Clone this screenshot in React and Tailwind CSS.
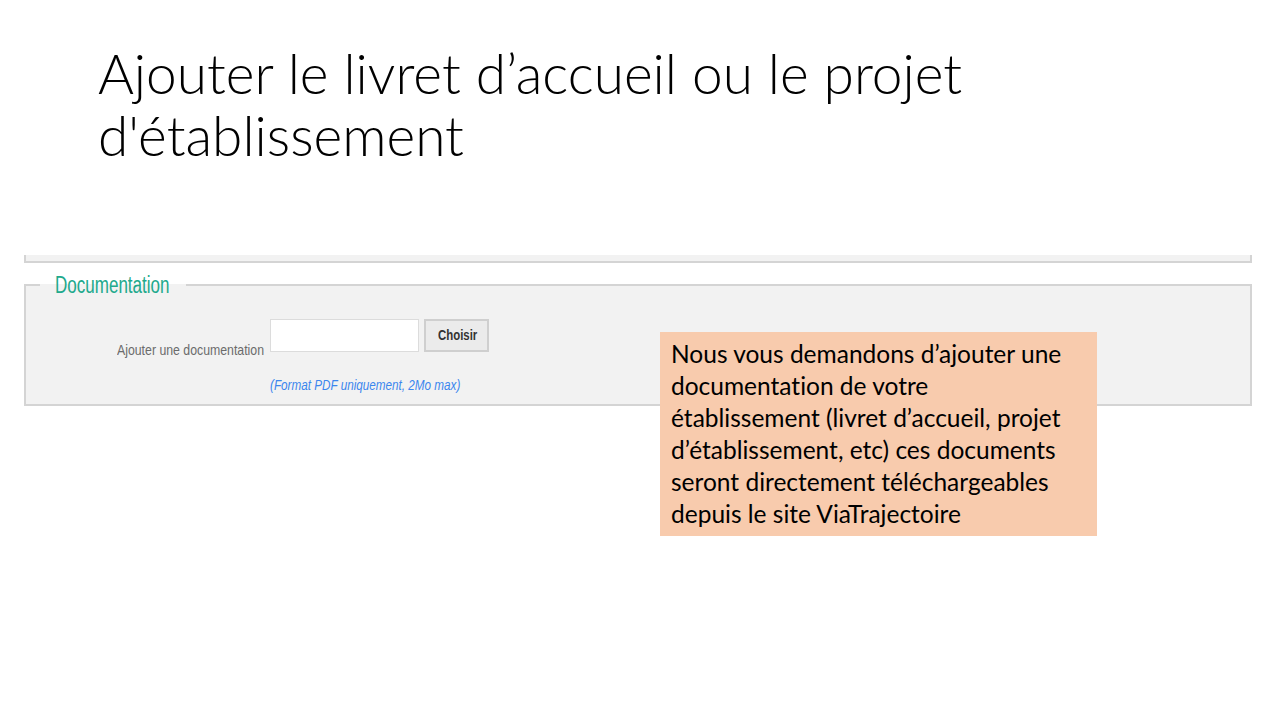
import React from 'react';

const narrow = "[font-family:'Liberation_Sans',Arial,sans-serif]";

function Squeezed({ width, scale, className, children }) {
    return (
        <span className={`inline-block overflow-visible whitespace-nowrap ${width} ${className}`}>
            <span className={`inline-block origin-left ${scale}`}>{children}</span>
        </span>
    );
}

function DocumentationFieldset() {
    return (
        <fieldset className="ml-[24px] mr-[28px] mt-[8px] border-2 border-[#d4d4d4] bg-[#f2f2f2] px-[14px] pb-[7px]">
            <legend className="px-[15px] text-[23px] leading-[26px] text-[#21a98c]">
                <Squeezed width="w-[116px]" scale="scale-x-[0.74]" className={narrow}>
                    Documentation
                </Squeezed>
            </legend>
            <div className="flex items-start pl-[77px] pt-[21px]">
                <Squeezed width="w-[148px] mt-[20px] mr-[5px]" scale="scale-x-[0.82]" className={`text-[15px] text-[#6b6b6b] ${narrow}`}>
                    Ajouter une documentation
                </Squeezed>
                <div className="flex flex-col">
                    <div className="flex gap-[5px]">
                        <div className="h-[33px] w-[149px] border border-[#dcdcdc] bg-white" />
                        <button className="flex h-[33px] w-[65px] items-center justify-center border-2 border-[#cfcfcf] bg-[#ebebeb] text-[15px] font-bold text-[#333]">
                            <Squeezed width="w-[37px]" scale="scale-x-[0.76]" className={narrow}>
                                Choisir
                            </Squeezed>
                        </button>
                    </div>
                    <Squeezed width="w-[190px] mt-[22px]" scale="scale-x-[0.78]" className={`text-[15px] italic text-[#3b86ee] ${narrow}`}>
                        (Format PDF uniquement, 2Mo max)
                    </Squeezed>
                </div>
            </div>
        </fieldset>
    );
}

export default function App() {
    return (
        <div className="relative h-[720px] w-[1280px] overflow-hidden bg-white [font-variant-ligatures:none]">
            <h1 className="pl-[98px] pt-[42px] text-[55px] font-light leading-[62px] text-black [font-family:Lato,'Open_Sans',sans-serif]">
                Ajouter le livret d’accueil ou le projet
                <br />
                d'établissement
            </h1>

            <div className="mt-[89px]">
                <div className="ml-[24px] mr-[28px] h-[8px] border-x-2 border-b-2 border-[#d4d4d4] bg-[#f2f2f2]" />
                <DocumentationFieldset />
            </div>

            <div className="absolute left-[660px] top-[332px] h-[204px] w-[437px] bg-[#f8cbad] px-[11px] pt-[6px] text-[24.5px] leading-[32px] text-black [font-family:Lato,'Open_Sans',sans-serif]">
                Nous vous demandons d’ajouter une
                <br />
                documentation de votre
                <br />
                établissement (livret d’accueil, projet
                <br />
                d’établissement, etc) ces documents
                <br />
                seront directement téléchargeables
                <br />
                depuis le site ViaTrajectoire
            </div>
        </div>
    );
}
